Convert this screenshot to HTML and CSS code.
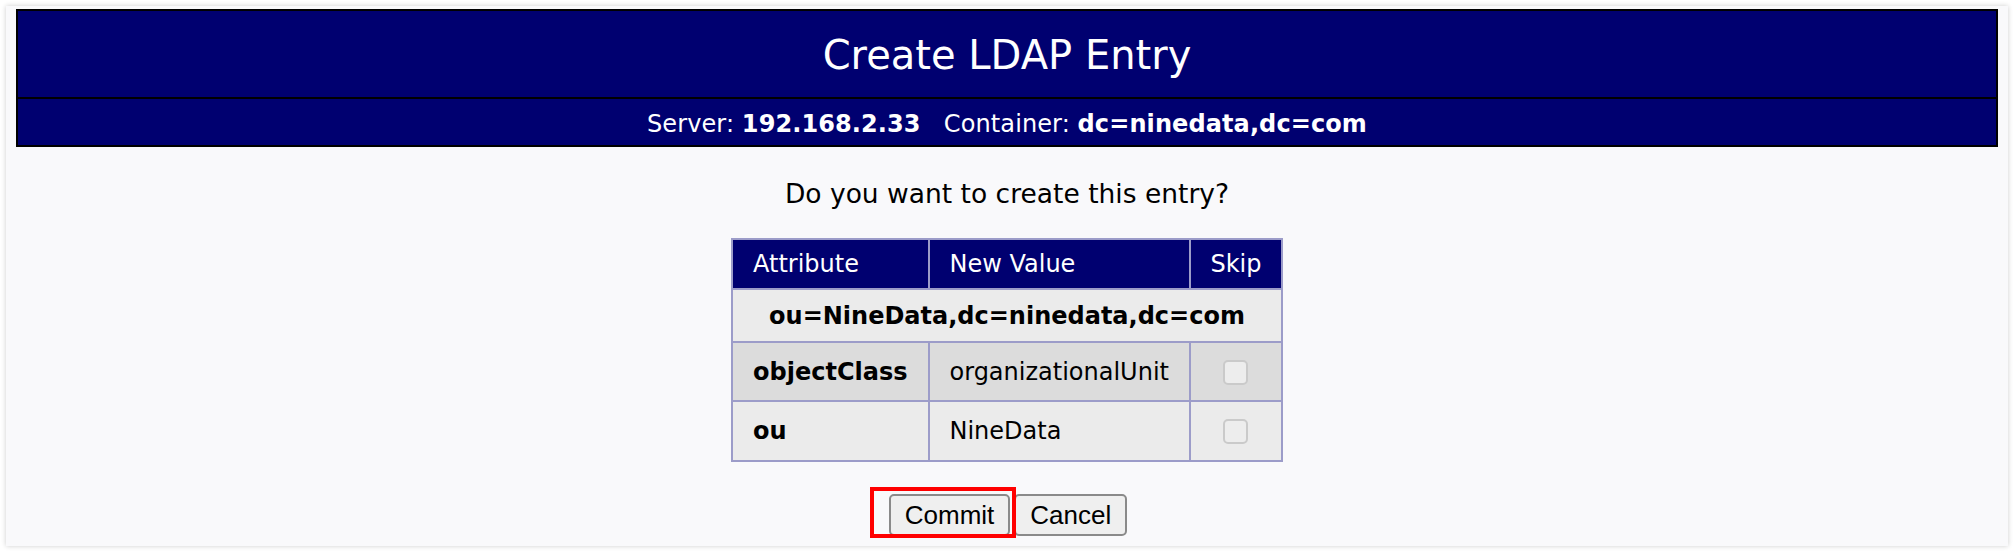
FILE: index.html
```html
<!DOCTYPE html>
<html lang="en">
<head>
  <meta charset="UTF-8">
  <title>Create LDAP Entry</title>
  <link rel="stylesheet" href="styles.css">
</head>
<body>

<div class="panel">
  <div class="head">
    <h1 class="title">Create LDAP Entry</h1>
    <div class="subtitle">Server: <b>192.168.2.33</b>&nbsp;&nbsp;&nbsp;Container: <b>dc=ninedata,dc=com</b></div>
  </div>

  <p class="question">Do you want to create this entry?</p>

  <table class="entry">
    <tr class="heading">
      <th class="col-attr">Attribute</th>
      <th class="col-value">New Value</th>
      <th class="col-skip">Skip</th>
    </tr>
    <tr class="dn">
      <td colspan="3">ou=NineData,dc=ninedata,dc=com</td>
    </tr>
    <tr class="row dark">
      <td class="attr">objectClass</td>
      <td class="value">organizationalUnit</td>
      <td class="skip"><input type="checkbox"></td>
    </tr>
    <tr class="row light">
      <td class="attr">ou</td>
      <td class="value">NineData</td>
      <td class="skip"><input type="checkbox"></td>
    </tr>
  </table>

  <div class="actions">
    <span class="marked"><button>Commit</button></span>
    <button>Cancel</button>
  </div>
</div>

</body>
</html>
```

FILE: styles.css
```css
* {
  box-sizing: border-box;
  margin: 0;
  padding: 0;
}

body {
  background: #fff;
  padding: 6px;
  font-family: 'DejaVu Sans', Verdana, sans-serif;
  color: #000;
}

.panel {
  background: #f9f9fb;
  box-shadow: 0 0 5px rgba(0, 0, 0, 0.2);
  padding: 3px 10px 10px;
  height: 540px;
}

/* navy title block */
.head {
  background: #000070;
  border: 2px solid #000;
  color: #fff;
  text-align: center;
}

.title {
  font-size: 40px;
  font-weight: normal;
  height: 88px;
  line-height: 88px;
  border-bottom: 2px solid #000;
}

.subtitle {
  font-size: 24px;
  letter-spacing: 0.1px;
  height: 46px;
  padding-top: 4px;
  line-height: 42px;
}

.question {
  text-align: center;
  font-size: 26.5px;
  line-height: 30px;
  margin-top: 32px;
}

/* entry table */
.entry {
  margin: 29px auto 0;
  border-collapse: separate;
  border-spacing: 0;
  border-top: 2px solid #9c9cc9;
  border-left: 2px solid #9c9cc9;
  font-size: 24px;
}

.entry th,
.entry td {
  border-right: 2px solid #9c9cc9;
  border-bottom: 2px solid #9c9cc9;
  vertical-align: middle;
}

.heading th {
  background: #000070;
  color: #fff;
  font-weight: normal;
  height: 50px;
  text-align: left;
  padding: 0 20px;
}

.col-attr { width: 196px; }
.col-value { width: 261px; }

.heading .col-skip {
  width: 92px;
  text-align: center;
  padding: 0;
}

.dn td {
  background: #ebebeb;
  font-weight: bold;
  text-align: center;
  height: 53px;
}

.row.dark td { background: #dcdcdc; height: 59px; }
.row.light td { background: #ebebeb; height: 60px; }

.attr {
  font-weight: bold;
  padding: 0 20px;
}

.value {
  padding: 0 20px;
}

.skip {
  text-align: center;
}

.skip input {
  appearance: none;
  -webkit-appearance: none;
  display: block;
  margin: 1px auto 0;
  width: 25px;
  height: 25px;
  border: 2px solid #cacaca;
  border-radius: 5px;
  background: #ededed;
}

/* buttons */
.actions {
  display: flex;
  justify-content: center;
  gap: 4px;
  margin-top: 32px;
  padding-left: 2px;
}

.actions button {
  font-family: 'Liberation Sans', Arial, sans-serif;
  font-size: 26px;
  height: 42px;
  padding: 0 14px;
  background: #efefef;
  color: #000;
  border: 2px solid #8a8a8a;
  border-radius: 5px;
}

.marked {
  position: relative;
  display: inline-flex;
}

.marked::after {
  content: '';
  position: absolute;
  top: -7px;
  left: -19px;
  right: -6px;
  bottom: -2px;
  border: 4px solid #f00;
  pointer-events: none;
}
```
